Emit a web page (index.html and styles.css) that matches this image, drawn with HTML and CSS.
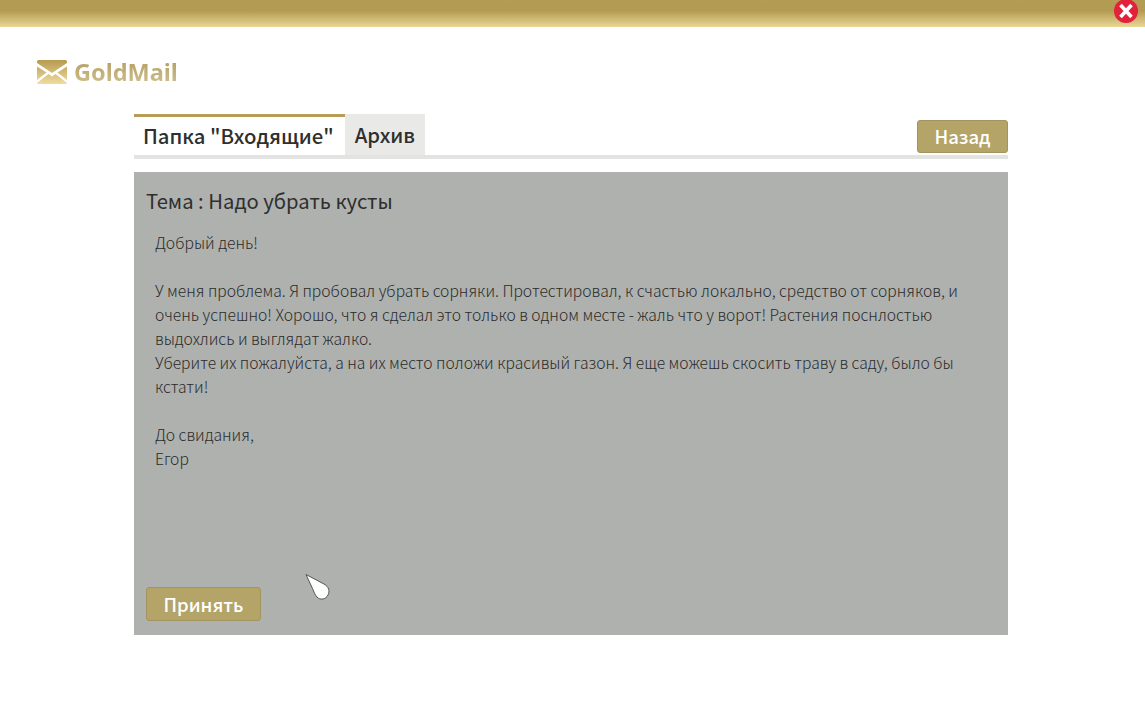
FILE: index.html
```html
<!DOCTYPE html>
<html lang="ru">
<head>
  <meta charset="UTF-8" />
  <title>GoldMail</title>
  <link rel="stylesheet" href="styles.css">
</head>
<body>
  <div class="top-bar">
    <svg class="close-btn" width="26" height="26" viewBox="0 0 26 26">
      <ellipse cx="13" cy="11" rx="12" ry="12" fill="#e2213a" />
      <path d="M7.5 5 L18.5 17 M18.5 5 L7.5 17" stroke="#fff" stroke-width="3.6" stroke-linecap="butt" />
    </svg>
  </div>

  <div class="logo">
    <svg width="30" height="24" viewBox="0 0 30 24">
      <defs>
        <linearGradient id="gold" x1="0" y1="0" x2="0" y2="1">
          <stop offset="0" stop-color="#b59a50" />
          <stop offset="1" stop-color="#f0dc9f" />
        </linearGradient>
      </defs>
      <path fill="url(#gold)" d="M1.5 0 H28.5 Q30 0 30 1.5 V3 L15 13 L0 3 V1.5 Q0 0 1.5 0 Z M0 6.5 L9.5 12.5 L0 20 Z M30 6.5 L20.5 12.5 L30 20 Z M0 23 L11.5 14 L15 16.5 L18.5 14 L30 23 Q30 24 28.5 24 H1.5 Q0 24 0 23 Z" />
    </svg>
    <span class="logo-text">GoldMail</span>
  </div>

  <div class="mail-box">
    <div class="tabs">
      <div class="tab active">Папка "Входящие"</div>
      <div class="tab">Архив</div>
      <button class="btn back-btn">Назад</button>
    </div>

    <div class="message">
      <h2 class="subject">Тема : Надо убрать кусты</h2>
      <div class="message-text">
        <p>Добрый день!</p>
        <p>У меня проблема. Я пробовал убрать сорняки. Протестировал, к счастью локально, средство от сорняков, и очень успешно! Хорошо, что я сделал это только в одном месте - жаль что у ворот! Растения поснлостью выдохлись и выглядат жалко.<br>Уберите их пожалуйста, а на их место положи красивый газон. Я еще можешь скосить траву в саду, было бы кстати!</p>
        <p>До свидания,<br>Егор</p>
      </div>
      <button class="btn accept-btn">Принять</button>
    </div>
  </div>

  <svg class="cursor" width="28" height="30" viewBox="0 0 28 30">
    <path d="M2 1.5 L20 11 C25 14 26 18 24 22 C22 26.5 16 27.5 13 24 C11 22 10 19 8.5 15.5 Z" fill="#fff" stroke="#555" stroke-width="1" stroke-linejoin="round" />
  </svg>
</body>
</html>
```

FILE: styles.css
```css
* {
  box-sizing: border-box;
}
html, body {
  height: 100%;
}
body {
  margin: 0;
  background-color: #fff;
  color: #2e2f2e;
  font-family: "Noto Sans CJK SC", "Noto Sans", sans-serif;
  overflow: hidden;
}
.top-bar {
  height: 27px;
  background: linear-gradient(to bottom, #b59c55 0%, #b39b52 40%, #ead795 100%);
}
.close-btn {
  position: absolute;
  top: 0;
  right: 6px;
}
.logo {
  display: flex;
  align-items: center;
  gap: 7px;
  height: 24px;
  margin: 33px 0 30px 37px;
}
.logo-text {
  font-family: "Noto Sans", sans-serif;
  font-size: 23.5px;
  font-weight: 700;
  background: linear-gradient(to bottom, #b09a5e, #d3c492);
  -webkit-background-clip: text;
  background-clip: text;
  color: transparent;
}
.mail-box {
  width: 874px;
  margin-left: 134px;
}
.tabs {
  display: flex;
  align-items: flex-start;
  height: 45px;
  border-bottom: 4px solid #e3e3e1;
}
.tab {
  height: 41px;
  padding: 0 10px;
  background-color: #e9e9e8;
  font-size: 20.3px;
  font-weight: 500;
  line-height: 41px;
}
.tab.active {
  padding: 0 11px 0 9px;
  background-color: #fff;
  border-top: 3px solid #b69c55;
  line-height: 37px;
}
.btn {
  border: 1px solid #a29560;
  border-radius: 3px;
  background-color: #b4a468;
  color: #fff;
  font-family: inherit;
  font-size: 18.5px;
  font-weight: 500;
  padding: 0;
}
.back-btn {
  width: 91px;
  height: 33px;
  margin: 6px 0 0 auto;
  line-height: 31px;
}
.message {
  display: flex;
  flex-direction: column;
  height: 463px;
  margin-top: 13px;
  padding: 15px 12px 14px;
  background-color: #afb1af;
}
.subject {
  margin: 0;
  font-size: 20.25px;
  font-weight: 400;
  line-height: 28px;
}
.message-text {
  flex: 1;
  margin-top: 16px;
  padding: 0 9px;
  font-size: 15.65px;
  font-weight: 300;
  line-height: 24px;
  color: #2a2b2a;
}
.message-text p {
  margin: 0 0 24px;
}
.accept-btn {
  width: 115px;
  height: 34px;
  line-height: 32px;
}
.cursor {
  position: absolute;
  left: 304px;
  top: 573px;
}
```
